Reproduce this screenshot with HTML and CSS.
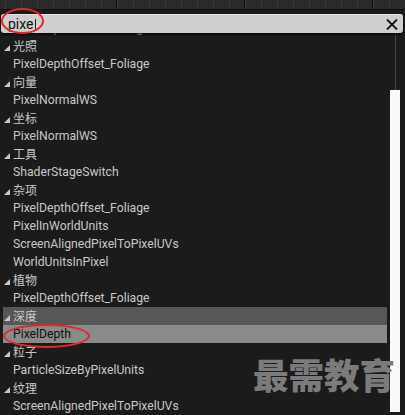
FILE: index.html
```html
<!DOCTYPE html>
<html lang="zh">
<head>
<meta charset="utf-8">
<title>Search</title>
<link rel="stylesheet" href="styles.css">
</head>
<body>
<div class="app">
  <div class="ruler"></div>
  <div class="search">
    <span class="query">pixe</span><span class="caret"></span>
    <span class="clear">
      <svg width="12" height="11" viewBox="0 0 12 11"><path d="M1 0.5 L11 10.5 M11 0.5 L1 10.5" stroke="#111" stroke-width="1.8" fill="none"/></svg>
    </span>
  </div>
  <div class="panel">
    <div class="list">
      <div class="peek"><div class="row item">PixelDepthOffset_Foliage</div></div>
      <div class="row cat"><span class="tri"></span>光照</div>
      <div class="row item">PixelDepthOffset_Foliage</div>
      <div class="row cat"><span class="tri"></span>向量</div>
      <div class="row item">PixelNormalWS</div>
      <div class="row cat"><span class="tri"></span>坐标</div>
      <div class="row item">PixelNormalWS</div>
      <div class="row cat"><span class="tri"></span>工具</div>
      <div class="row item">ShaderStageSwitch</div>
      <div class="row cat"><span class="tri"></span>杂项</div>
      <div class="row item">PixelDepthOffset_Foliage</div>
      <div class="row item">PixelInWorldUnits</div>
      <div class="row item">ScreenAlignedPixelToPixelUVs</div>
      <div class="row item">WorldUnitsInPixel</div>
      <div class="row cat"><span class="tri"></span>植物</div>
      <div class="row item">PixelDepthOffset_Foliage</div>
      <div class="row cat hover"><span class="tri"></span>深度</div>
      <div class="row item selected">PixelDepth</div>
      <div class="row cat"><span class="tri"></span>粒子</div>
      <div class="row item">ParticleSizeByPixelUnits</div>
      <div class="row cat"><span class="tri"></span>纹理</div>
      <div class="row item">ScreenAlignedPixelToPixelUVs</div>
    </div>
    <div class="scrollbar">
      <div class="track"></div>
      <div class="thumb"></div>
    </div>
  </div>
  <div class="mark mark-search"></div>
  <div class="mark mark-item"></div>
  <div class="watermark">最需教育</div>
</div>
</body>
</html>
```
FILE: styles.css
```css
html, body {
  margin: 0;
  padding: 0;
  background: #1b1b1b;
}
body {
  font-family: Roboto, "Noto Sans CJK SC", sans-serif;
  color: #c8c8c8;
}
.app {
  position: relative;
  width: 405px;
  height: 415px;
  overflow: hidden;
  display: flex;
  flex-direction: column;
}
.ruler {
  height: 9px;
  flex: none;
  border-bottom: 1px solid #0e0e0e;
  background-color: #2a2a2a;
  background-image:
    repeating-linear-gradient(90deg, transparent 0 116px, #101010 116px 117px, transparent 117px 128px),
    repeating-linear-gradient(90deg, transparent 0 5px, #3a3a3a 5px 6px, transparent 6px 16px);
}
.search {
  position: relative;
  z-index: 2;
  flex: none;
  height: 18px;
  margin: 4px 2px 0 1px;
  background: #cfcfcf;
  border-top: 1px solid #e6e6e6;
  border-radius: 3px;
  box-shadow: 0 2px 2px rgba(0,0,0,0.6);
  display: flex;
  align-items: center;
  padding-left: 7px;
  padding-right: 3px;
  color: #111;
  font-size: 14px;
}
.query {
  line-height: 18px;
}
.caret {
  width: 1px;
  height: 12px;
  background: #222;
  margin-left: 1px;
  margin-top: 1px;
}
.clear {
  margin-left: auto;
  width: 12px;
  height: 11px;
  display: flex;
  margin-right: 2px;
}
.panel {
  flex: 1;
  display: flex;
  min-height: 0;
}
.list {
  flex: none;
  width: 384px;
  margin-left: 3px;
  overflow: hidden;
  display: flex;
  flex-direction: column;
}
.peek {
  flex: none;
  height: 4px;
  overflow: hidden;
  display: flex;
  flex-direction: column;
  justify-content: flex-end;
}
.row {
  flex: none;
  height: 18px;
  line-height: 18px;
  font-size: 12.2px;
  white-space: nowrap;
  display: flex;
  align-items: center;
}
.item {
  padding-left: 10px;
}
.cat {
  padding-left: 1px;
  font-family: "Noto Sans CJK SC", sans-serif;
  font-size: 12px;
}
.tri {
  width: 0;
  height: 0;
  border-left: 6px solid transparent;
  border-bottom: 6px solid #c8c8c8;
  margin-right: 3px;
  margin-top: 3px;
}
.hover {
  background: #575757;
}
.selected {
  background: #8a8a8a;
  color: #111;
}
.scrollbar {
  flex: 1;
  display: flex;
  flex-direction: column;
  align-items: flex-start;
}
.track {
  width: 1px;
  height: 57px;
  margin-left: 8px;
  background: #474747;
}
.thumb {
  width: 10px;
  height: 322px;
  margin-left: 3px;
  background: #fafafa;
}
.mark {
  position: absolute;
  border: 2px solid #e8262a;
  border-radius: 50%;
  box-sizing: border-box;
  z-index: 3;
}
.mark-search {
  left: 1px;
  top: 8px;
  width: 43px;
  height: 26px;
}
.mark-item {
  left: 3px;
  top: 324px;
  width: 87px;
  height: 24px;
}
.watermark {
  position: absolute;
  left: 253px;
  top: 354px;
  font-family: "Noto Sans CJK SC", sans-serif;
  font-weight: 900;
  font-size: 35.5px;
  line-height: 40px;
  color: #7b7b7b;
  z-index: 3;
}
```
